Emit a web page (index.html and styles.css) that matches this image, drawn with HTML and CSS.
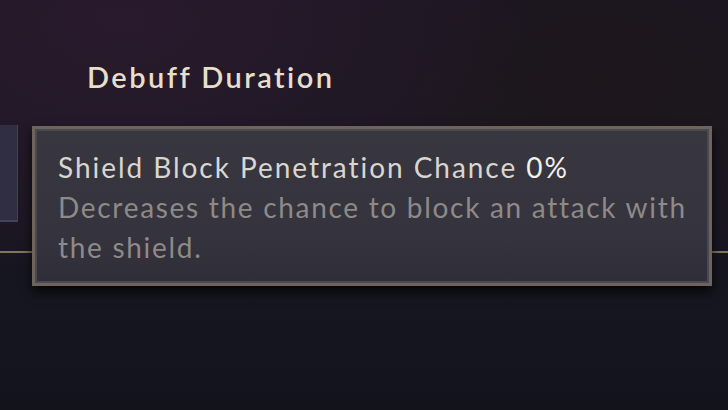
FILE: index.html
```html
<!DOCTYPE html>
<html>
<head>
<meta charset="utf-8">
<link rel="stylesheet" href="styles.css">
</head>
<body>
<div class="screen">
  <div class="heading">Debuff Duration</div>
  <div class="stub-row"><div class="stub"></div></div>
  <div class="divider"></div>
  <div class="tooltip">
    <div class="tip-title">Shield Block Penetration Chance <span class="tip-value">0%</span></div>
    <div class="tip-desc">Decreases the chance to block an attack with the shield.</div>
  </div>
</div>
</body>
</html>
```
FILE: styles.css
```css
html, body {
  margin: 0;
  padding: 0;
  background: #15151d;
}
.screen {
  position: relative;
  width: 728px;
  height: 410px;
  overflow: hidden;
  font-family: Lato, "Noto Sans", sans-serif;
  background:
    radial-gradient(ellipse 420px 260px at 120px 20px, rgba(52, 30, 52, 0.55), rgba(52, 30, 52, 0) 100%),
    radial-gradient(ellipse 300px 200px at 600px 80px, rgba(30, 22, 22, 0.6), rgba(30, 22, 22, 0) 100%),
    linear-gradient(180deg, #1c1624 0%, #1b1722 45%, #15161f 75%, #12131b 100%);
}
.heading {
  padding: 59px 0 0 87px;
  height: 66px;
  font-size: 29px;
  font-weight: 600;
  letter-spacing: 2.45px;
  color: #e6dfcc;
  line-height: 36px;
}
.stub-row {
  display: flex;
}
.stub {
  width: 17px;
  height: 95px;
  background: #302e42;
  border-right: 1px solid #444256;
  border-bottom: 2px solid #45435a;
}
.divider {
  margin-top: 29px;
  height: 2px;
  background: #857560;
}
.tooltip {
  position: absolute;
  left: 32px;
  top: 126px;
  width: 680px;
  height: 160px;
  box-sizing: border-box;
  border: 3px solid #6d655b;
  background: linear-gradient(180deg, #38363f 0%, #35333d 70%, #2f2d37 100%);
  box-shadow: inset 0 0 0 2px #4a4850, 0 6px 10px rgba(0, 0, 0, 0.75);
  padding: 18px 10px 0 23px;
}
.tip-title {
  font-size: 28px;
  line-height: 40px;
  color: #d9d6d1;
  letter-spacing: 1.95px;
}
.tip-value {
  color: #f2f0ec;
}
.tip-desc {
  font-size: 28px;
  line-height: 40px;
  color: #8e8a87;
  letter-spacing: 1.7px;
}
```
